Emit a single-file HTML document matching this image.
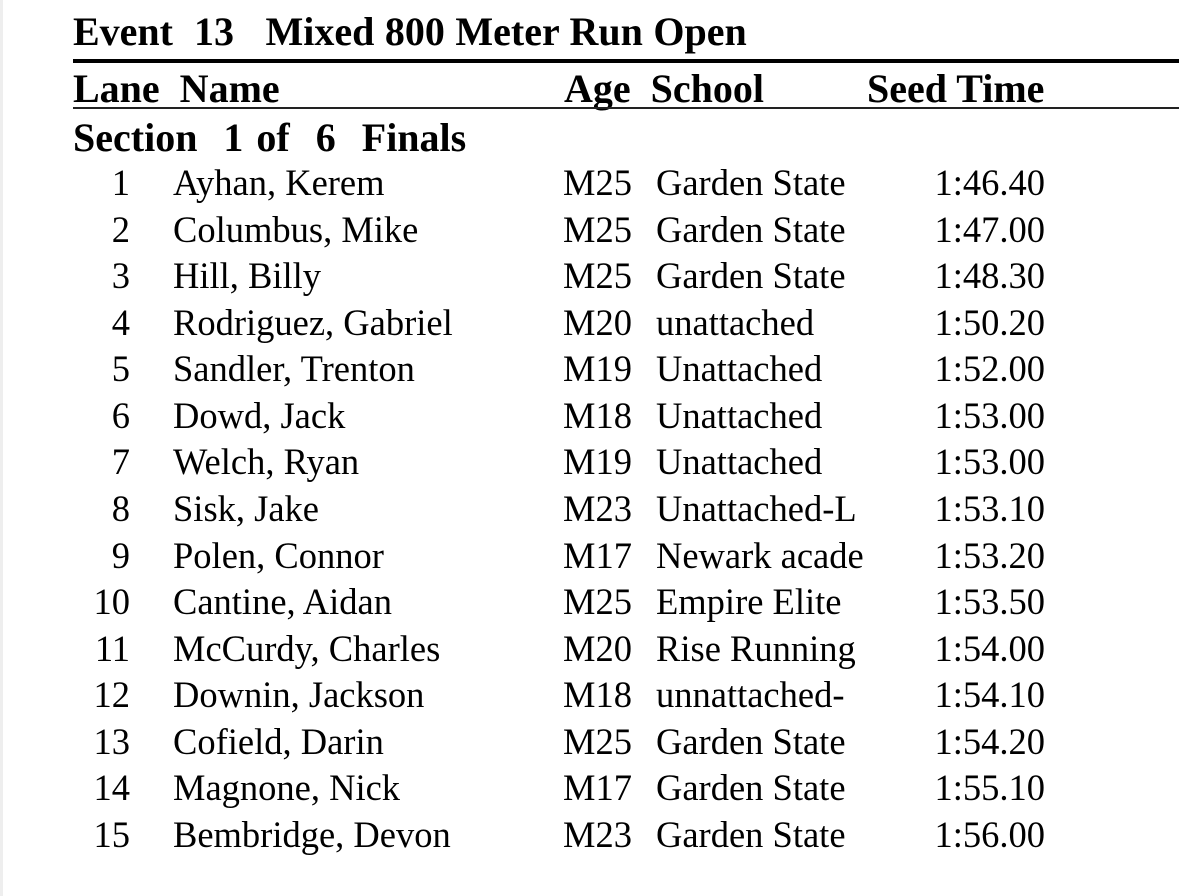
<!DOCTYPE html>
<html><head><style>
body{margin:0;width:1179px;height:896px;background:#fff;position:relative;overflow:hidden;font-family:"Liberation Serif",serif;color:#000}
.strip{position:absolute;left:0;top:0;width:3px;height:896px;background:#eee}
.t{position:absolute;white-space:nowrap;font-size:36.5px;line-height:40px}
.b{font-weight:bold;font-size:40px}
.r{text-align:right}
.l1{position:absolute;left:73px;right:0;top:59px;height:4px;background:#000}
.l2{position:absolute;left:73px;right:0;top:107px;height:2px;background:#222}
</style></head><body>
<div class="strip"></div>
<div class="t b" style="left:73px;top:12px;word-spacing:0.5px">Event&nbsp; 13&nbsp;&nbsp; Mixed 800 Meter Run Open</div>
<div class="l1"></div>
<div class="t b" style="left:73px;top:69px;word-spacing:10px">Lane Name</div>
<div class="t b" style="left:564px;top:69px;word-spacing:10px">Age School</div>
<div class="t b" style="left:867px;top:69px">Seed Time</div>
<div class="l2"></div>
<div class="t b" style="left:73px;top:118px;word-spacing:3px">Section&nbsp; 1 of&nbsp; 6&nbsp; Finals</div>
<div id="rows"></div>
<script>
const d=[["Ayhan, Kerem","M25","Garden State","1:46.40"],["Columbus, Mike","M25","Garden State","1:47.00"],["Hill, Billy","M25","Garden State","1:48.30"],["Rodriguez, Gabriel","M20","unattached","1:50.20"],["Sandler, Trenton","M19","Unattached","1:52.00"],["Dowd, Jack","M18","Unattached","1:53.00"],["Welch, Ryan","M19","Unattached","1:53.00"],["Sisk, Jake","M23","Unattached-L","1:53.10"],["Polen, Connor","M17","Newark acade","1:53.20"],["Cantine, Aidan","M25","Empire Elite","1:53.50"],["McCurdy, Charles","M20","Rise Running","1:54.00"],["Downin, Jackson","M18","unnattached-","1:54.10"],["Cofield, Darin","M25","Garden State","1:54.20"],["Magnone, Nick","M17","Garden State","1:55.10"],["Bembridge, Devon","M23","Garden State","1:56.00"]];
let h="";d.forEach((r,i)=>{const y=163+i*46.57;
h+=`<div class="t r" style="left:60px;width:70px;top:${y}px">${i+1}</div><div class="t" style="left:173px;top:${y}px">${r[0]}</div><div class="t" style="left:563px;top:${y}px">${r[1]}</div><div class="t" style="left:656px;top:${y}px">${r[2]}</div><div class="t r" style="left:845px;width:200px;top:${y}px">${r[3]}</div>`;});
document.getElementById("rows").innerHTML=h;
</script>
</body></html>
